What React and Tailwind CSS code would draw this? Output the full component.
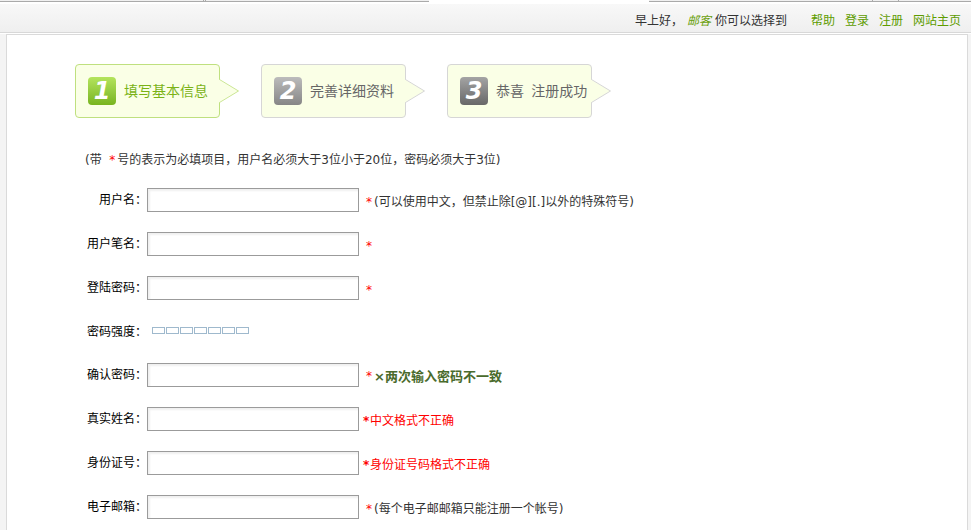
const LINKS = ['帮助', '登录', '注册', '网站主页'];

const STEPS = [
  { number: 1, text: '填写基本信息', active: true, badge: 'from-[#b4e45c] to-[#78b41e]' },
  { number: 2, text: '完善详细资料', active: false, badge: 'from-[#bcbcbc] to-[#868686]' },
  { number: 3, text: '恭喜\u00a0\u00a0注册成功', active: false, badge: 'from-[#a4a4a4] to-[#686868]' },
];

function Star() {
  return <span className="w-2 shrink-0 text-[#ff0000] italic">*</span>;
}

function FormatError({ children }) {
  return (
    <span className="-ml-[3px] flex text-[#ff0000]">
      <span className="w-[7px] font-bold italic">*</span>
      {children}
    </span>
  );
}

function Step({ number, text, active, badge }) {
  return (
    <li
      aria-current={active ? 'step' : undefined}
      className={
        'relative flex h-[54px] w-[145px] shrink-0 items-center gap-2 rounded border bg-[#faffe6] pl-3 text-sm whitespace-nowrap ' +
        (active ? 'border-[#bfe07f] text-[#7ab317]' : 'border-[#d6d6d6] text-[#666666]')
      }
    >
      <span
        className={
          'flex h-7 w-7 shrink-0 items-center justify-center rounded bg-linear-to-b text-2xl leading-7 font-bold text-white italic ' +
          badge
        }
      >
        {number}
      </span>
      <span className='font-["Noto_Sans","Noto_Sans_CJK_SC",sans-serif] leading-5'>{text}</span>
      <svg className="absolute top-[14px] left-full" width="20" height="25" viewBox="0 0 20 25" aria-hidden="true">
        <path d="M0 0.5 L19.5 12 L0 23.5 Z" fill="#faffe6" />
        <path d="M0.5 0.5 L19.5 12 L0.5 23.5" fill="none" stroke={active ? '#cbe694' : '#d6d6d6'} />
      </svg>
      <span className="absolute top-[15px] -right-px h-[22px] w-px bg-[#faffe6]" />
    </li>
  );
}

function Field({ id, label, type = 'text', children }) {
  return (
    <div className="flex h-6 items-center">
      <label htmlFor={id} className="w-[72px] shrink-0 text-right text-black">
        {label}：
      </label>
      <input
        id={id}
        type={type}
        className="h-6 w-[212px] shrink-0 border border-[#9b9b9b] bg-white px-1 text-xs shadow-[inset_2px_2px_2px_#f0f0f0] outline-none"
      />
      <div className="flex items-center pt-[3px] pl-[7px] whitespace-nowrap">{children}</div>
    </div>
  );
}

export default function App() {
  return (
    <div className='flex min-h-screen flex-col bg-[#f4f4f4] font-["DejaVu_Sans","Noto_Sans_CJK_SC",sans-serif] text-xs text-[#333333]'>
      <div className="flex h-1 items-start bg-white">
        <div className="flex h-[2px] w-[429px] gap-px border-b border-[#aaaaaa] bg-[#f0f0f0] pl-[203px]">
          <span className="h-px w-px bg-[#aaaaaa]" />
          <span className="h-px w-px bg-[#aaaaaa]" />
        </div>
        <div className="w-[220px]" />
        <div className="flex h-[2px] flex-1 justify-end gap-[25px] border-b border-[#aaaaaa] bg-[#f0f0f0] pr-[72px]">
          <span className="h-px w-px bg-[#aaaaaa]" />
          <span className="h-px w-px bg-[#aaaaaa]" />
        </div>
      </div>

      <header className="flex h-[29px] items-center justify-end border-b border-[#d8d8d8] bg-linear-to-b from-[#f8f8f8] to-[#efefef] pt-[6px] pr-[10px] whitespace-nowrap">
        <p className="mr-6 flex">
          早上好，
          <em className="mx-1 text-[#6a9f0c]">邮客</em>
          你可以选择到
        </p>
        <nav className="flex gap-[10px] text-[#5e9c00]">
          {LINKS.map((text) => (
            <a key={text} href="#">
              {text}
            </a>
          ))}
        </nav>
      </header>

      <div className="flex flex-1 flex-col border-t border-white">
        <main className="mr-[3px] ml-[6px] flex-1 border border-b-0 border-[#dadada] bg-white pt-[29px] pl-[68px]">
          <ol className="flex gap-[41px]">
            {STEPS.map((step) => (
              <Step key={step.number} {...step} />
            ))}
          </ol>

          <p className="mt-8 flex pl-[10px] leading-5 whitespace-nowrap">
            (带&nbsp;&nbsp;
            <Star />
            号的表示为必填项目，用户名必须大于3位小于20位，密码必须大于3位)
          </p>

          <form className="mt-[18px] flex flex-col gap-5">
            <Field id="username" label="用户名">
              <Star />
              (可以使用中文，但禁止除[@][.]以外的特殊符号)
            </Field>
            <Field id="penname" label="用户笔名">
              <Star />
            </Field>
            <Field id="password" label="登陆密码" type="password">
              <Star />
            </Field>
            <div className="flex h-[23px] items-center">
              <span className="w-[72px] text-right text-black">密码强度：</span>
              <div role="img" aria-label="密码强度" className="flex gap-px pb-[2px] pl-[5px]">
                {[1, 2, 3, 4, 5, 6, 7].map((level) => (
                  <span key={level} className="h-[7px] w-[13px] border border-[#9fb9cd]" />
                ))}
              </div>
            </div>
            <Field id="confirm" label="确认密码" type="password">
              <Star />
              <strong className="text-[13px] text-[#4a6b2c]">×两次输入密码不一致</strong>
            </Field>
            <Field id="realname" label="真实姓名">
              <FormatError>中文格式不正确</FormatError>
            </Field>
            <Field id="idcard" label="身份证号">
              <FormatError>身份证号码格式不正确</FormatError>
            </Field>
            <Field id="email" label="电子邮箱">
              <Star />
              (每个电子邮邮箱只能注册一个帐号)
            </Field>
          </form>
        </main>
      </div>
    </div>
  );
}
